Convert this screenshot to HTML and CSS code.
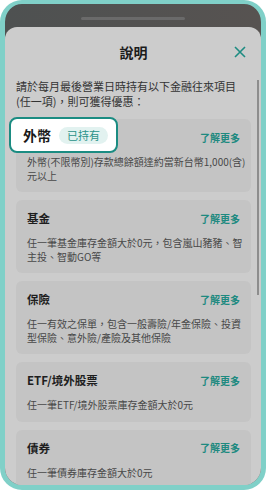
FILE: index.html
```html
<!DOCTYPE html>
<html lang="zh-Hant">
<head>
<meta charset="utf-8">
<link rel="stylesheet" href="styles.css">
</head>
<body>
<div class="phone">
  <div class="top"><div class="handle"></div></div>
  <div class="sheet">
    <div class="header">
      <span></span>
      <h1 class="title">說明</h1>
      <svg class="close" width="12" height="12" viewBox="0 0 12 12"><path d="M1 1L11 11M11 1L1 11" stroke="#1e8c82" stroke-width="1.6" fill="none"/></svg>
    </div>
    <p class="intro">請於每月最後營業日時持有以下金融往來項目<br>(任一項)，則可獲得優惠：</p>
    <div class="list">
      <div class="card first">
        <div class="row end"><span class="more">了解更多</span></div>
        <p class="desc">外幣(不限幣別)存款總餘額達約當新台幣1,000(含)<br>元以上</p>
        <div class="spot"><span class="spot-title">外幣</span><span class="badge">已持有</span></div>
      </div>
      <div class="card">
        <div class="row"><span class="ctitle">基金</span><span class="more">了解更多</span></div>
        <p class="desc">任一筆基金庫存金額大於0元，包含嵐山豬豬、智<br>主投、智動GO等</p>
      </div>
      <div class="card">
        <div class="row"><span class="ctitle">保險</span><span class="more">了解更多</span></div>
        <p class="desc">任一有效之保單，包含一般壽險/年金保險、投資<br>型保險、意外險/產險及其他保險</p>
      </div>
      <div class="card">
        <div class="row"><span class="ctitle">ETF/境外股票</span><span class="more">了解更多</span></div>
        <p class="desc">任一筆ETF/境外股票庫存金額大於0元</p>
      </div>
      <div class="card">
        <div class="row"><span class="ctitle">債券</span><span class="more">了解更多</span></div>
        <p class="desc">任一筆債券庫存金額大於0元</p>
      </div>
    </div>
    <div class="scrollbar"></div>
  </div>
</div>
</body>
</html>
```
FILE: styles.css
```css
* { box-sizing: border-box; }
html, body { margin: 0; padding: 0; background: #ffffff; }
body { font-family: "Noto Sans CJK TC", "Noto Sans", sans-serif; }

.phone {
  width: 266px;
  height: 490px;
  border: 5px solid #80d0c8;
  border-top-width: 4px;
  border-radius: 22px;
  overflow: hidden;
  background: linear-gradient(90deg, #4e5151, #575351);
  display: flex;
  flex-direction: column;
}

.top {
  height: 23px;
  flex: none;
  display: flex;
  justify-content: center;
  padding-top: 13px;
}
.handle {
  width: 104px;
  height: 3px;
  border-radius: 2px;
  background: #6a6a6a;
}

.sheet {
  flex: 1;
  position: relative;
  background: #cccccc;
  border-radius: 12px 12px 0 0;
  padding: 0 10px 0 11px;
  overflow: hidden;
}

.header {
  height: 50px;
  display: grid;
  grid-template-columns: 1fr auto 1fr;
  align-items: center;
}
.title {
  margin: 0;
  font-size: 14px;
  font-weight: 700;
  color: #1c1c1c;
  line-height: 20px;
}
.close {
  justify-self: end;
  margin-right: 5px;
}

.intro {
  margin: 2px 0 0 0;
  font-size: 11px;
  line-height: 15px;
  color: #333333;
  white-space: nowrap;
}

.list {
  margin-top: 10px;
  display: flex;
  flex-direction: column;
  gap: 8px;
}

.card {
  position: relative;
  background: #c4c4c4;
  border-radius: 6px;
  padding: 10px 11px 10px 11px;
}
.row {
  height: 16px;
  display: flex;
  justify-content: space-between;
  align-items: center;
}
.row.end { justify-content: flex-end; }
.ctitle {
  font-size: 11.5px;
  font-weight: 700;
  color: #1e1e1e;
}
.more {
  font-size: 10px;
  font-weight: 700;
  color: #1e8a80;
}
.desc {
  margin: 10px 0 0 0;
  font-size: 10px;
  line-height: 13.5px;
  color: #484848;
  white-space: nowrap;
}

.spot {
  position: absolute;
  top: -2px;
  left: -7px;
  width: 109px;
  height: 36px;
  border: 2px solid #1b8c82;
  border-radius: 8px;
  background: #ffffff;
  display: flex;
  align-items: center;
  gap: 8px;
  padding-left: 12px;
}
.spot-title {
  font-size: 14px;
  font-weight: 700;
  color: #1a1a1a;
}
.badge {
  height: 17px;
  padding: 0 8px;
  border-radius: 9px;
  background: #e2f2f0;
  color: #2a9389;
  font-size: 11px;
  line-height: 17px;
}

.scrollbar {
  position: absolute;
  top: 53px;
  right: 2px;
  width: 2px;
  height: 215px;
  background: #8d8d8d;
}
```
